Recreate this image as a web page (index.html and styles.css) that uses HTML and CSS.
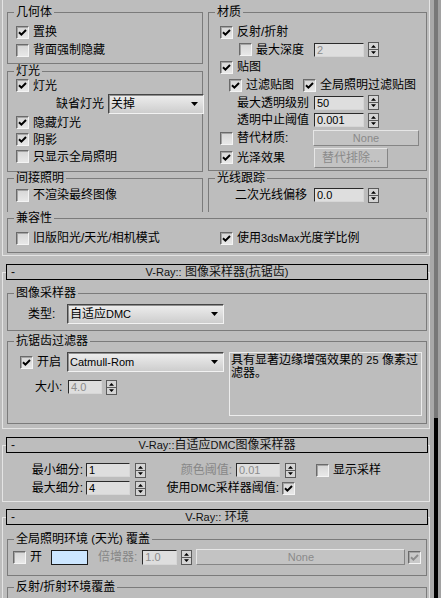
FILE: index.html
```html
<!DOCTYPE html>
<html>
<head>
<meta charset="utf-8">
<link rel="stylesheet" href="styles.css">
</head>
<body>
<div class="screen">
<div class="main">

<div class="rollout r1">
  <div class="cols">
    <div class="col col-l">
      <fieldset class="grp"><legend>几何体</legend>
        <div class="body b-geo">
          <div class="row h18"><span class="cb"><svg class="ck" viewBox="0 0 11 11"><path d="M2 5.2 L4.4 7.6 L9 3"/></svg></span><span>置换</span></div>
          <div class="row h18"><span class="cb"></span><span>背面强制隐藏</span></div>
        </div>
      </fieldset>
      <fieldset class="grp g-light"><legend>灯光</legend>
        <div class="body b-light">
          <div class="row h17"><span class="cb"><svg class="ck" viewBox="0 0 11 11"><path d="M2 5.2 L4.4 7.6 L9 3"/></svg></span><span>灯光</span></div>
          <div class="row h20 pl40"><span class="lbl-def">缺省灯光</span><div class="dd w96"><span>关掉</span><svg class="tri" viewBox="0 0 7 4"><path d="M0 0H7L3.5 4Z"/></svg></div></div>
          <div class="row h17"><span class="cb"><svg class="ck" viewBox="0 0 11 11"><path d="M2 5.2 L4.4 7.6 L9 3"/></svg></span><span>隐藏灯光</span></div>
          <div class="row h17"><span class="cb"><svg class="ck" viewBox="0 0 11 11"><path d="M2 5.2 L4.4 7.6 L9 3"/></svg></span><span>阴影</span></div>
          <div class="row h17"><span class="cb"></span><span>只显示全局照明</span></div>
        </div>
      </fieldset>
      <fieldset class="grp open"><legend>间接照明</legend>
        <div class="body b-open">
          <div class="row h18"><span class="cb"></span><span>不渲染最终图像</span></div>
        </div>
      </fieldset>
    </div>
    <div class="col col-r">
      <fieldset class="grp"><legend>材质</legend>
        <div class="body b-mat">
          <div class="row h18 pl11"><span class="cb"><svg class="ck" viewBox="0 0 11 11"><path d="M2 5.2 L4.4 7.6 L9 3"/></svg></span><span>反射/折射</span></div>
          <div class="row h17"><div class="lead w105 pl30"><span class="cb"></span><span>最大深度</span></div><div class="in w50 dis">2</div><svg class="spin" viewBox="0 0 11 15"><rect x="0.5" y="0.5" width="10" height="14"/><line x1="1" y1="7.5" x2="10" y2="7.5"/><path class="ar" d="M5.5 3 L8 5.8 H3 Z"/><path class="ar" d="M3 9.2 H8 L5.5 12 Z"/></svg></div>
          <div class="row h18 pl11"><span class="cb"><svg class="ck" viewBox="0 0 11 11"><path d="M2 5.2 L4.4 7.6 L9 3"/></svg></span><span>贴图</span></div>
          <div class="row h18 pl20"><span class="cb"><svg class="ck" viewBox="0 0 11 11"><path d="M2 5.2 L4.4 7.6 L9 3"/></svg></span><span>过滤贴图</span><span class="cb ml9"><svg class="ck" viewBox="0 0 11 11"><path d="M2 5.2 L4.4 7.6 L9 3"/></svg></span><span>全局照明过滤贴图</span></div>
          <div class="row h17"><div class="lead w105 pl28"><span>最大透明级别</span></div><div class="in w50">50</div><svg class="spin" viewBox="0 0 11 15"><rect x="0.5" y="0.5" width="10" height="14"/><line x1="1" y1="7.5" x2="10" y2="7.5"/><path class="ar" d="M5.5 3 L8 5.8 H3 Z"/><path class="ar" d="M3 9.2 H8 L5.5 12 Z"/></svg></div>
          <div class="row h18"><div class="lead w105 pl28"><span>透明中止阈值</span></div><div class="in w50">0.001</div><svg class="spin" viewBox="0 0 11 15"><rect x="0.5" y="0.5" width="10" height="14"/><line x1="1" y1="7.5" x2="10" y2="7.5"/><path class="ar" d="M5.5 3 L8 5.8 H3 Z"/><path class="ar" d="M3 9.2 H8 L5.5 12 Z"/></svg></div>
          <div class="row h18"><div class="lead w104 pl11"><span class="cb"></span><span>替代材质:</span></div><div class="btn w106 bh16"><span class="lt">None</span></div></div>
          <div class="row h21"><div class="lead w105 pl11"><span class="cb"><svg class="ck" viewBox="0 0 11 11"><path d="M2 5.2 L4.4 7.6 L9 3"/></svg></span><span>光泽效果</span></div><div class="btn w74 bh20">替代排除...</div></div>
        </div>
      </fieldset>
      <fieldset class="grp open g-ray"><legend>光线跟踪</legend>
        <div class="body b-ray">
          <div class="row h18"><div class="lead w105 pl26"><span>二次光线偏移</span></div><div class="in w50">0.0</div><svg class="spin" viewBox="0 0 11 15"><rect x="0.5" y="0.5" width="10" height="14"/><line x1="1" y1="7.5" x2="10" y2="7.5"/><path class="ar" d="M5.5 3 L8 5.8 H3 Z"/><path class="ar" d="M3 9.2 H8 L5.5 12 Z"/></svg></div>
        </div>
      </fieldset>
    </div>
  </div>
  <fieldset class="grp"><legend>兼容性</legend>
    <div class="body b-compat">
      <div class="row h18"><div class="lead w204"><span class="cb"></span><span>旧版阳光/天光/相机模式</span></div><span class="cb"><svg class="ck" viewBox="0 0 11 11"><path d="M2 5.2 L4.4 7.6 L9 3"/></svg></span><span>使用<span class="lt">3dsMax</span>光度学比例</span></div>
    </div>
  </fieldset>
</div>

<div class="rollout r2">
  <div class="hdr"><span class="minus">-</span><span class="ttl"><span class="lt">V-Ray::</span> 图像采样器<span class="lt">(</span>抗锯齿<span class="lt">)</span></span><span></span></div>
  <fieldset class="grp g-type"><legend>图像采样器</legend>
    <div class="body b-type">
      <div class="row h20"><div class="lead w39"><span>类型:</span></div><div class="dd w157"><span>自适应<span class="lt">DMC</span></span><svg class="tri" viewBox="0 0 7 4"><path d="M0 0H7L3.5 4Z"/></svg></div></div>
    </div>
  </fieldset>
  <fieldset class="grp g-aa"><legend>抗锯齿过滤器</legend>
    <div class="body b-aa">
      <div class="aa-l">
        <div class="row h20"><div class="lead w59 pl12"><span class="cb"><svg class="ck" viewBox="0 0 11 11"><path d="M2 5.2 L4.4 7.6 L9 3"/></svg></span><span>开启</span></div><div class="dd w157"><span class="lt">Catmull-Rom</span><svg class="tri" viewBox="0 0 7 4"><path d="M0 0H7L3.5 4Z"/></svg></div></div>
        <div class="row h18 mt6"><div class="lead w60 pl27"><span>大小:</span></div><div class="in w34 dis">4.0</div><svg class="spin" viewBox="0 0 11 15"><rect x="0.5" y="0.5" width="10" height="14"/><line x1="1" y1="7.5" x2="10" y2="7.5"/><path class="ar" d="M5.5 3 L8 5.8 H3 Z"/><path class="ar" d="M3 9.2 H8 L5.5 12 Z"/></svg></div>
      </div>
      <div class="desc">具有显著边缘增强效果的 <span class="lt">25</span> 像素过<br>滤器。</div>
    </div>
  </fieldset>
</div>

<div class="rollout r3">
  <div class="hdr"><span class="minus">-</span><span class="ttl"><span class="lt">V-Ray::</span>自适应<span class="lt">DMC</span>图像采样器</span><span></span></div>
  <div class="dmc">
    <div class="row h18"><span class="la">最小细分:</span><div class="in w44 ml3">1</div><svg class="spin ml5" viewBox="0 0 11 15"><rect x="0.5" y="0.5" width="10" height="14"/><line x1="1" y1="7.5" x2="10" y2="7.5"/><path class="ar" d="M5.5 3 L8 5.8 H3 Z"/><path class="ar" d="M3 9.2 H8 L5.5 12 Z"/></svg><span class="lb dtxt">颜色阈值:</span><div class="in w44 ml4 dis">0.01</div><svg class="spin ml5" viewBox="0 0 11 15"><rect x="0.5" y="0.5" width="10" height="14"/><line x1="1" y1="7.5" x2="10" y2="7.5"/><path class="ar" d="M5.5 3 L8 5.8 H3 Z"/><path class="ar" d="M3 9.2 H8 L5.5 12 Z"/></svg><span class="cb ml20"></span><span>显示采样</span></div>
    <div class="row h18"><span class="la">最大细分:</span><div class="in w44 ml3">4</div><svg class="spin ml5" viewBox="0 0 11 15"><rect x="0.5" y="0.5" width="10" height="14"/><line x1="1" y1="7.5" x2="10" y2="7.5"/><path class="ar" d="M5.5 3 L8 5.8 H3 Z"/><path class="ar" d="M3 9.2 H8 L5.5 12 Z"/></svg><span class="lc">使用<span class="lt">DMC</span>采样器阈值:</span><span class="cb ml3"><svg class="ck" viewBox="0 0 11 11"><path d="M2 5.2 L4.4 7.6 L9 3"/></svg></span></div>
  </div>
</div>

<div class="rollout r4">
  <div class="hdr"><span class="minus">-</span><span class="ttl"><span class="lt">V-Ray::</span> 环境</span><span></span></div>
  <fieldset class="grp g-env"><legend>全局照明环境 <span class="lt">(</span>天光<span class="lt">)</span> 覆盖</legend>
    <div class="body b-env">
      <div class="row h18"><span class="cb"></span><span>开</span><span class="swatch"></span><span class="dtxt ml10">倍增器:</span><div class="in w35 h15 ml5 dis">1.0</div><svg class="spin ml4" viewBox="0 0 11 15"><rect x="0.5" y="0.5" width="10" height="14"/><line x1="1" y1="7.5" x2="10" y2="7.5"/><path class="ar" d="M5.5 3 L8 5.8 H3 Z"/><path class="ar" d="M3 9.2 H8 L5.5 12 Z"/></svg><div class="btn w209 bh16 ml4"><span class="lt">None</span></div><span class="cb cbdis ml3"><svg class="ck" viewBox="0 0 11 11"><path d="M2 5.2 L4.4 7.6 L9 3"/></svg></span></div>
    </div>
  </fieldset>
  <fieldset class="grp g-refl"><legend>反射/折射环境覆盖</legend>
    <div class="body b-refl"></div>
  </fieldset>
</div>

</div>
<div class="sbar"><div class="sb1"></div><div class="sb2"></div><div class="sb3"></div></div>
</div>
</body>
</html>
```

FILE: styles.css
```css
* { box-sizing: border-box; }
html, body { margin: 0; padding: 0; }
body {
  background: #bdbdbd;
  width: 441px;
  height: 598px;
  overflow: hidden;
  font-family: "Liberation Sans", "Noto Sans CJK SC", sans-serif;
  font-size: 12px;
  line-height: 14px;
  color: #000;
}
.screen { display: flex; height: 598px; }
.main { width: 430px; flex: none; overflow: hidden; height: 598px; }
.sbar { display: flex; flex: none; width: 11px; height: 598px; }
.sb1 { width: 4px; background: #a9a9a9; }
.sb2 { width: 4px; background: linear-gradient(#787878 0, #787878 418px, #000 418px); }
.sb3 { width: 3px; background: #a2a2a2; }

.lt { font-family: "Liberation Sans", sans-serif; font-size: 11px; }

/* rollouts */
.rollout {
  margin-left: 2px;
  width: 428px;
  border: 1px solid #e4e4e4;
  padding: 0 2px 0 4px;
}
.r1 { border-top: 0; padding-top: 6px; padding-bottom: 2px; }
.r2 { margin-top: 16px; padding-bottom: 4px; }
.r3 { margin-top: 16px; padding-bottom: 4px; }
.r4 { margin-top: 15px; height: 120px; }

.hdr {
  margin: -9px -1px 0 -1px;
  height: 16px;
  border: 1px solid #000;
  background: #bdbdbd;
  display: grid;
  grid-template-columns: 1fr auto 1fr;
  align-items: center;
  line-height: 14px;
  color: #111;
}
.minus { padding-left: 4px; }

/* group boxes */
.grp {
  margin: 0;
  padding: 0;
  border: 1px solid #7b7b7b;
  min-width: 0;
}
.grp > legend {
  padding: 0 2px;
  margin-left: 6px;
  height: 12px;
  line-height: 12px;
  background: #bdbdbd;
}
.grp.open { border-bottom: 0; }

.cols { display: grid; grid-template-columns: 196px 219px; column-gap: 5px; }
.col { display: flex; flex-direction: column; }
.grp.g-light { margin-top: 1px; }
.grp.g-ray { margin-top: 1px; }

.b-geo { padding: 5px 0 4px 8px; }
.b-light { padding: 0 0 6px 8px; }
.b-open { padding: 2px 0 8px 8px; }
.b-mat { padding: 5px 0 2px 0; }
.b-ray { padding: 2px 0 8px 0; }
.b-compat { padding: 5px 0 5px 8px; }
.grp.g-type { margin-top: 7px; }
.b-type { padding: 5px 0 6px 20px; }
.grp.g-aa { margin-top: 4px; }
.b-aa { padding: 5px 0 7px 0; display: flex; align-items: flex-start; }
.aa-l { width: 216px; flex: none; }
.grp.g-env { margin-top: 8px; }
.b-env { padding: 3px 0 9px 5px; }
.grp.g-refl { margin-top: 5px; }
.b-refl { height: 40px; }

/* rows */
.row { display: flex; align-items: center; white-space: nowrap; }
.h15 { height: 15px; }
.h17 { height: 17px; }
.h18 { height: 18px; }
.h20 { height: 20px; }
.h21 { height: 21px; }
.lead { display: flex; align-items: center; flex: none; }
.w34 { width: 34px; } .w35 { width: 35px; } .w39 { width: 39px; } .w44 { width: 44px; }
.w50 { width: 50px; } .w59 { width: 59px; } .w60 { width: 60px; } .w74 { width: 74px; }
.w96 { width: 96px; } .w104 { width: 104px; } .w105 { width: 105px; } .w106 { width: 106px; }
.w157 { width: 157px; } .w204 { width: 204px; } .w209 { width: 209px; }
.pl11 { padding-left: 11px; } .pl12 { padding-left: 12px; } .pl20 { padding-left: 20px; }
.pl26 { padding-left: 26px; } .pl27 { padding-left: 27px; } .pl28 { padding-left: 28px; }
.pl30 { padding-left: 30px; } .pl40 { padding-left: 40px; }
.ml3 { margin-left: 3px; } .ml4 { margin-left: 4px; } .ml5 { margin-left: 5px; }
.ml9 { margin-left: 9px; } .ml10 { margin-left: 10px; } .ml20 { margin-left: 20px; }
.mt6 { margin-top: 6px; }

.lbl-def { margin-right: 4px; }

/* checkbox */
.cb {
  width: 13px;
  height: 13px;
  flex: none;
  margin-right: 4px;
  border: 1px solid;
  border-color: #6a6a6a #f4f4f4 #f4f4f4 #6a6a6a;
  background: linear-gradient(#d6d6d6, #e8e8e8);
  box-shadow: inset 1px 1px 0 #a4a4a4;
  display: block;
}
.cb.ml3 { margin-right: 0; }
.ck { display: block; width: 11px; height: 11px; fill: none; stroke: #000; stroke-width: 2; }
.cbdis { background: #c9c9c9; }
.cbdis .ck { stroke: #8c8c8c; }

/* inputs */
.in {
  height: 14px;
  flex: none;
  border: 1px solid;
  border-color: #2a2a2a #d6d6d6 #d6d6d6 #2a2a2a;
  background: #dedede;
  font-family: "Liberation Sans", sans-serif;
  font-size: 11px;
  line-height: 12px;
  padding-left: 2px;
  overflow: hidden;
}
.in.h15 { height: 15px; line-height: 13px; }
.dis { color: #8c8c8c; }
.dtxt { color: #878787; }

.spin { display: block; flex: none; width: 11px; height: 15px; margin-left: 4px; }
.spin rect { fill: #d4d4d4; stroke: #5a5a5a; }
.spin line { stroke: #5a5a5a; }
.spin .ar { fill: #000; }
.spin.ml5 { margin-left: 5px; }

/* dropdown */
.dd {
  height: 20px;
  flex: none;
  display: flex;
  align-items: center;
  justify-content: space-between;
  padding: 0 5px 0 2px;
  border: 1px solid;
  border-color: #454545 #f2f2f2 #f2f2f2 #454545;
  background: linear-gradient(#eeeeee, #cdcdcd);
  box-shadow: inset 1px 1px 0 #909090;
}
.tri { display: block; width: 7px; height: 4px; fill: #000; }

/* buttons */
.btn {
  flex: none;
  display: flex;
  align-items: center;
  justify-content: center;
  border: 1px solid;
  border-color: #e6e6e6 #858585 #858585 #e6e6e6;
  background: #c3c3c3;
  color: #8a8a8a;
}
.bh16 { height: 16px; }
.bh20 { height: 20px; }

/* description */
.desc {
  margin-left: 5px;
  width: 193px;
  height: 64px;
  border: 1px solid #ececec;
  padding: 1px 0 0 1px;
  line-height: 13px;
  white-space: nowrap;
}

/* DMC */
.dmc { padding-top: 8px; }
.la { width: 76px; flex: none; text-align: right; }
.lb { width: 86px; flex: none; text-align: right; }
.lc { width: 133px; flex: none; text-align: right; }

/* env */
.swatch {
  width: 37px;
  height: 15px;
  margin-left: 9px;
  flex: none;
  border: 1px solid #1a1a1a;
  background: #cce6ff;
}
```
